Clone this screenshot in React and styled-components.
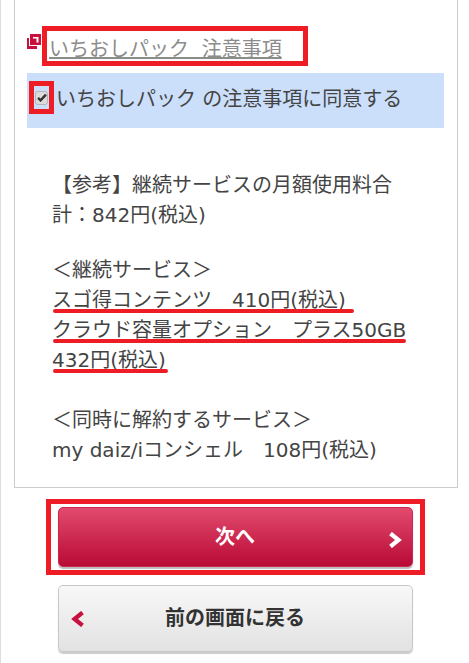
import React from 'react'
import styled, { createGlobalStyle } from 'styled-components'

const GlobalStyle = createGlobalStyle`
  html, body {
    margin: 0;
    padding: 0;
    background: #fff;
  }
  body {
    font-family: "DejaVu Sans", "Noto Sans CJK JP", sans-serif;
    color: #333;
  }
`

const App = () => {
  return (
    <Page>
      <GlobalStyle />
      <Panel>
        <LinkRow>
          <WindowIcon width="14" height="15" viewBox="0 0 14 15">
            <path d="M0 4h10v11H0z" fill="#c8113f" />
            <path d="M2 2h12v10H2z" fill="#fff" />
            <path d="M3 0h11v11H3z" fill="#c8113f" />
            <path d="M6 3h5.500v5.500H9.500V4.500H6z" fill="#fff" />
          </WindowIcon>
          <LinkBox>
            <NoticeLink href="#">いちおしパック&nbsp;&nbsp;注意事項</NoticeLink>
          </LinkBox>
        </LinkRow>
        <AgreeRow>
          <CheckFrame>
            <CheckBox>
              <svg viewBox="0 0 14 12" width="10" height="9">
                <path d="M1.500 6.500 L5 10 L12.500 2" fill="none" stroke="#333" strokeWidth="3.400" />
              </svg>
            </CheckBox>
          </CheckFrame>
          <AgreeText>いちおしパック の注意事項に同意する</AgreeText>
        </AgreeRow>
        <Info>
          <Para $gap={25}>【参考】継続サービスの月額使用料合計：842円(税込)</Para>
          <Para $gap={30}>
            <Line>＜継続サービス＞</Line>
            <Marked $extend={8}>スゴ得コンテンツ　410円(税込)</Marked>
            <Marked $extend={0}>クラウド容量オプション　プラス50GB</Marked>
            <Marked $extend={2}>432円(税込)</Marked>
          </Para>
          <Para>
            <Line>＜同時に解約するサービス＞</Line>
            <Line>my daiz/iコンシェル　108円(税込)</Line>
          </Para>
        </Info>
      </Panel>
      <Buttons>
        <NextFrame>
          <NextButton type="button">
            次へ
            <NextArrow viewBox="0 0 14 16" width="14" height="16">
              <path d="M2.500 1.500 L10.500 8 L2.500 14.500" fill="none" stroke="#fff" strokeWidth="4.200" />
            </NextArrow>
          </NextButton>
        </NextFrame>
        <BackButton type="button">
          <BackArrow viewBox="0 0 14 16" width="14" height="16">
            <path d="M11.500 1.500 L3.500 8 L11.500 14.500" fill="none" stroke="#c8113f" strokeWidth="4.200" />
          </BackArrow>
          前の画面に戻る
        </BackButton>
      </Buttons>
    </Page>
  )
}

export default App

const Page = styled.div`
  width: 469px;
  height: 663px;
  overflow: hidden;
  box-sizing: border-box;
  border-left: 1px solid #ddd;
  padding-left: 13px;
`
const Panel = styled.section`
  width: 444px;
  height: 488px;
  box-sizing: border-box;
  border: 1px solid #ccc;
  border-top: 0;
  padding: 26px 0 0 12px;
`
const LinkRow = styled.div`
  display: flex;
  align-items: flex-start;
`
const WindowIcon = styled.svg`
  margin: 8px 1px 0 0;
  flex: none;
`
const LinkBox = styled.div`
  box-sizing: border-box;
  width: 266px;
  height: 40px;
  border: 5px solid #ee1c25;
  padding-left: 2px;
  line-height: 37px;
`
const NoticeLink = styled.a`
  font-size: 20px;
  color: #8c8c8c;
  text-decoration: underline;
  text-decoration-thickness: 2px;
  text-decoration-skip-ink: none;
`
const AgreeRow = styled.label`
  display: flex;
  align-items: center;
  width: 417px;
  height: 55px;
  margin-top: 7px;
  padding-left: 2px;
  box-sizing: border-box;
  background: #cbdffb;
`
const CheckFrame = styled.span`
  flex: none;
  box-sizing: border-box;
  width: 25px;
  height: 33px;
  margin-top: -6px;
  border: 5px solid #ee1c25;
  display: flex;
  align-items: center;
  justify-content: center;
`
const CheckBox = styled.span`
  box-sizing: border-box;
  width: 13px;
  height: 14px;
  display: flex;
  align-items: center;
  justify-content: center;
  background: #dcdcdc;
  border: 1px solid #b5b5b5;
  border-radius: 3px;
`
const AgreeText = styled.span`
  margin: -6px 0 0 2px;
  font-size: 20px;
  color: #444;
`
const Info = styled.div`
  padding: 42px 0 0 25px;
  width: 350px;
  font-size: 20px;
  line-height: 30px;
  color: #444;
`
const Para = styled.p`
  margin: 0 0 ${props => props.$gap || 0}px;
`
const Line = styled.span`
  display: block;
  white-space: nowrap;
`
const Marked = styled.span`
  position: relative;
  display: block;
  width: fit-content;
  white-space: nowrap;
  &::after {
    content: "";
    position: absolute;
    left: 1px;
    right: -${props => props.$extend}px;
    bottom: 2px;
    height: 4px;
    border-radius: 2px;
    background: #ee1c25;
  }
`
const Buttons = styled.div`
  display: flex;
  flex-direction: column;
  align-items: center;
  width: 442px;
  margin-top: 11px;
`
const NextFrame = styled.div`
  box-sizing: border-box;
  width: 379px;
  height: 76px;
  padding: 3px 7px;
  border: 5px solid #ee1c25;
`
const ButtonBase = styled.button`
  position: relative;
  display: block;
  box-sizing: border-box;
  width: 355px;
  height: 60px;
  padding: 0 0 4px;
  border-radius: 5px;
  font-family: inherit;
  font-size: 20px;
  font-weight: 700;
  cursor: pointer;
`
const NextButton = styled(ButtonBase)`
  border: 1px solid #c9284f;
  background: linear-gradient(#e24a6e, #b90a36);
  box-shadow: 0 2px 1px #bbb;
  color: #fff;
`
const BackButton = styled(ButtonBase)`
  margin-top: 10px;
  height: 67px;
  border: 1px solid #c8c8c8;
  background: linear-gradient(#f8f8f8, #e2e2e2);
  box-shadow: 0 2px 1px #ccc;
  color: #333;
`
const NextArrow = styled.svg`
  position: absolute;
  right: 10px;
  top: 24px;
`
const BackArrow = styled.svg`
  position: absolute;
  left: 12px;
  top: 25px;
`
